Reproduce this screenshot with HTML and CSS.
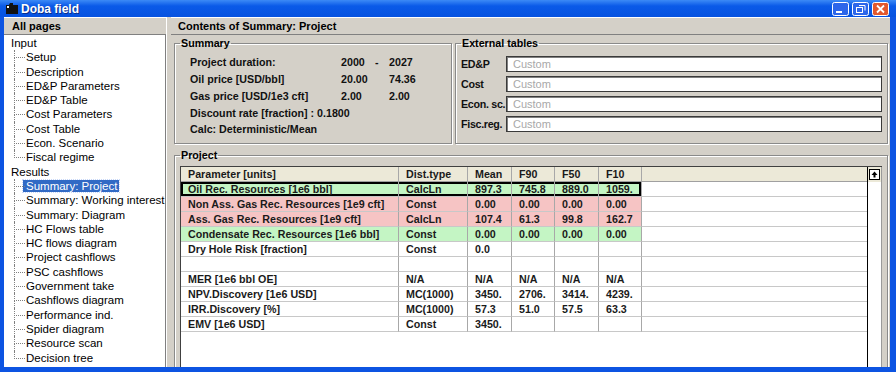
FILE: index.html
```html
<!DOCTYPE html>
<html lang="en">
<head>
    <meta charset="UTF-8">
    <title>Doba field</title>
    <link rel="stylesheet" href="styles.css">
</head>
<body>
    <div class="window">
        <div class="titlebar">
            <svg class="app-icon" width="12" height="11" viewBox="0 0 12 11">
                <path d="M0 2h3l1-2h3v2h5v9H0z" fill="#111"/>
                <rect x="1" y="3" width="2" height="2" fill="#fff"/>
            </svg>
            <span class="title">Doba field</span>
            <div class="controls">
                <svg class="ctl" width="17" height="14" viewBox="0 0 17 14">
                    <rect x="0.5" y="0.5" width="16" height="13" rx="2" fill="#2d66ea" stroke="#fff"/>
                    <rect x="4" y="9" width="6" height="2" fill="#fff"/>
                </svg>
                <svg class="ctl" width="17" height="14" viewBox="0 0 17 14">
                    <rect x="0.5" y="0.5" width="16" height="13" rx="2" fill="#2d66ea" stroke="#fff"/>
                    <rect x="4.5" y="5.5" width="6" height="5" fill="none" stroke="#fff"/>
                    <path d="M7 3.5h6v5" fill="none" stroke="#fff"/>
                </svg>
                <svg class="ctl" width="17" height="14" viewBox="0 0 17 14">
                    <rect x="0.5" y="0.5" width="16" height="13" rx="2" fill="#e2582e" stroke="#fff"/>
                    <path d="M5 3.5l7 7M12 3.5l-7 7" stroke="#fff" stroke-width="1.8"/>
                </svg>
            </div>
        </div>
        <div class="frame">
            <div class="sidebar">
                <div class="pane-head">All pages</div>
                <ul class="tree">
                    <li>Input
                        <ul>
                            <li>Setup</li>
                            <li>Description</li>
                            <li>ED&amp;P Parameters</li>
                            <li>ED&amp;P Table</li>
                            <li>Cost Parameters</li>
                            <li>Cost Table</li>
                            <li>Econ. Scenario</li>
                            <li>Fiscal regime</li>
                        </ul>
                    </li>
                    <li>Results
                        <ul>
                            <li class="sel"><span>Summary: Project</span></li>
                            <li>Summary: Working interest</li>
                            <li>Summary: Diagram</li>
                            <li>HC Flows table</li>
                            <li>HC flows diagram</li>
                            <li>Project cashflows</li>
                            <li>PSC cashflows</li>
                            <li>Government take</li>
                            <li>Cashflows diagram</li>
                            <li>Performance ind.</li>
                            <li>Spider diagram</li>
                            <li>Resource scan</li>
                            <li>Decision tree</li>
                        </ul>
                    </li>
                </ul>
            </div>
            <div class="splitter"></div>
            <div class="main">
                <div class="pane-head">Contents of Summary: Project</div>
                <div class="content">
                    <div class="top-row">
                        <fieldset class="group summary">
                            <legend>Summary</legend>
                            <div class="summary-grid">
                                <span>Project duration:</span><span>2000</span><span>-</span><span>2027</span>
                                <span>Oil price [USD/bbl]</span><span>20.00</span><span></span><span>74.36</span>
                                <span>Gas price [USD/1e3 cft]</span><span>2.00</span><span></span><span>2.00</span>
                                <span class="wide">Discount rate [fraction] : 0.1800</span>
                                <span class="wide">Calc: Deterministic/Mean</span>
                            </div>
                        </fieldset>
                        <fieldset class="group external">
                            <legend>External tables</legend>
                            <div class="ext-row"><label>ED&amp;P</label><input type="text" placeholder="Custom"></div>
                            <div class="ext-row"><label>Cost</label><input type="text" placeholder="Custom"></div>
                            <div class="ext-row"><label>Econ. sc.</label><input type="text" placeholder="Custom"></div>
                            <div class="ext-row"><label>Fisc.reg.</label><input type="text" placeholder="Custom"></div>
                        </fieldset>
                    </div>
                    <fieldset class="group project">
                        <legend>Project</legend>
                        <div class="grid-wrap">
                            <table class="grid">
                                <colgroup>
                                    <col style="width:218px"><col style="width:69px"><col style="width:44px">
                                    <col style="width:43px"><col style="width:44px"><col style="width:43px"><col>
                                </colgroup>
                                <thead>
                                    <tr><th>Parameter [units]</th><th>Dist.type</th><th>Mean</th><th>F90</th><th>F50</th><th>F10</th><th class="fill"></th></tr>
                                </thead>
                                <tbody>
                                    <tr class="green focus"><td>Oil Rec. Resources [1e6 bbl]</td><td>CalcLn</td><td>897.3</td><td>745.8</td><td>889.0</td><td>1059.</td><td class="fill"></td></tr>
                                    <tr class="pink"><td>Non Ass. Gas Rec. Resources [1e9 cft]</td><td>Const</td><td>0.00</td><td>0.00</td><td>0.00</td><td>0.00</td><td class="fill"></td></tr>
                                    <tr class="pink"><td>Ass. Gas Rec. Resources [1e9 cft]</td><td>CalcLn</td><td>107.4</td><td>61.3</td><td>99.8</td><td>162.7</td><td class="fill"></td></tr>
                                    <tr class="green"><td>Condensate Rec. Resources [1e6 bbl]</td><td>Const</td><td>0.00</td><td>0.00</td><td>0.00</td><td>0.00</td><td class="fill"></td></tr>
                                    <tr><td>Dry Hole Risk [fraction]</td><td>Const</td><td>0.0</td><td></td><td></td><td></td><td class="fill"></td></tr>
                                    <tr><td></td><td></td><td></td><td></td><td></td><td></td><td class="fill"></td></tr>
                                    <tr><td>MER [1e6 bbl OE]</td><td>N/A</td><td>N/A</td><td>N/A</td><td>N/A</td><td>N/A</td><td class="fill"></td></tr>
                                    <tr><td>NPV.Discovery [1e6 USD]</td><td>MC(1000)</td><td>3450.</td><td>2706.</td><td>3414.</td><td>4239.</td><td class="fill"></td></tr>
                                    <tr><td>IRR.Discovery [%]</td><td>MC(1000)</td><td>57.3</td><td>51.0</td><td>57.5</td><td>63.3</td><td class="fill"></td></tr>
                                    <tr><td>EMV [1e6 USD]</td><td>Const</td><td>3450.</td><td></td><td></td><td></td><td class="fill"></td></tr>
                                </tbody>
                            </table>
                            <div class="scrollbar">
                                <div class="scroll-head">
                                    <span class="scroll-btn">
                                        <svg width="7" height="7" viewBox="0 0 7 7"><path d="M3.5 0.5L6.5 4H4.5V6.5H2.5V4H0.5z" fill="#000"/></svg>
                                    </span>
                                </div>
                            </div>
                        </div>
                    </fieldset>
                </div>
            </div>
        </div>
    </div>
</body>
</html>
```

FILE: styles.css
```css
body {
    margin: 0;
    padding: 0;
    font-family: "Liberation Sans", Arial, sans-serif;
    background-color: #0d54e2;
}
.window {
    width: 896px;
    height: 372px;
    display: flex;
    flex-direction: column;
    background-color: #0d54e2;
    overflow: hidden;
}
.titlebar {
    height: 17px;
    flex: none;
    display: flex;
    align-items: center;
    padding: 0 7px 0 6px;
    background: linear-gradient(#3c8af6, #0a5ae8 35%, #0652e0);
    color: #fff;
}
.app-icon {
    margin-right: 3px;
}
.title {
    font-size: 12px;
    font-weight: bold;
    text-shadow: 1px 1px 0 #0b2f8a;
}
.controls {
    margin-left: auto;
    display: flex;
    gap: 3px;
}
.frame {
    flex: 1;
    display: flex;
    min-height: 0;
    padding: 0 6px 5px 4px;
}
.sidebar {
    width: 162px;
    display: flex;
    flex-direction: column;
}
.pane-head {
    height: 16px;
    flex: none;
    line-height: 16px;
    padding-left: 8px;
    background-color: #d4d0c8;
    border-top: 1px solid #fff;
    border-bottom: 1px solid #808080;
    font-size: 11px;
    font-weight: bold;
    color: #000;
}
.main .pane-head {
    padding-left: 7px;
}
.tree {
    flex: 1;
    list-style: none;
    margin: 0;
    padding: 1px 0 0 7px;
    background-color: #fff;
    border-right: 1px solid #808080;
    font-size: 11.5px;
    line-height: 14.3px;
    color: #000;
    overflow: hidden;
    white-space: nowrap;
}
.tree ul {
    list-style: none;
    margin: 0;
    padding: 0 0 0 15px;
}
.tree ul li {
    position: relative;
}
.tree ul li::before {
    content: "";
    position: absolute;
    left: -12px;
    top: 0;
    width: 10px;
    height: 7px;
    border-left: 1px dotted #808080;
    border-bottom: 1px dotted #808080;
}
.tree ul li::after {
    content: "";
    position: absolute;
    left: -12px;
    top: 7px;
    bottom: 0;
    border-left: 1px dotted #808080;
}
.tree ul li:last-child::after {
    display: none;
}
.tree .sel span {
    display: inline-block;
    line-height: 12px;
    margin-left: -3px;
    padding: 0 2px 0 3px;
    background-color: #316ac5;
    color: #fff;
    outline: 1px dotted #c8d8f8;
}
.splitter {
    width: 4px;
    background-color: #d4d0c8;
    border-left: 1px solid #fff;
}
.main {
    flex: 1;
    display: flex;
    flex-direction: column;
    background-color: #d4d0c8;
    overflow: hidden;
}
.content {
    flex: 1;
    display: flex;
    flex-direction: column;
    padding: 2px 2px 0 3px;
    min-height: 0;
}
.top-row {
    display: flex;
    gap: 3px;
    height: 107px;
    flex: none;
}
.group {
    margin: 0;
    padding: 0 5px;
    border: 1px solid #8a8a8a;
    box-shadow: inset 1px 1px 0 #fff, 1px 1px 0 #fff;
    min-width: 0;
}
.group legend {
    padding: 0 1px;
    font-size: 10.7px;
    line-height: 13px;
    font-weight: bold;
    color: #000;
}
.summary {
    width: 266px;
    flex: none;
}
.summary-grid {
    display: grid;
    grid-template-columns: 151px 34px 14px auto;
    grid-auto-rows: 16.75px;
    align-items: center;
    padding: 4px 0 0 10px;
    font-size: 10.7px;
    font-weight: bold;
    color: #111;
}
.summary-grid .wide {
    grid-column: 1 / 5;
}
.external {
    flex: 1;
}
.ext-row {
    display: flex;
    align-items: center;
    height: 16px;
    margin-bottom: 4px;
}
.ext-row:first-of-type {
    margin-top: 6px;
}
.ext-row label {
    width: 45px;
    flex: none;
    white-space: nowrap;
    font-size: 10.7px;
    letter-spacing: -0.3px;
    font-weight: bold;
    color: #111;
}
.ext-row input {
    flex: 1;
    height: 16px;
    box-sizing: border-box;
    margin: 0;
    padding: 0 0 0 6px;
    border: 1px solid #3a3a3a;
    box-shadow: inset 1px 1px 0 #808080;
    background-color: #fff;
    font-family: "Liberation Sans", Arial, sans-serif;
    font-size: 11px;
}
.ext-row input::placeholder {
    color: #a8a8a8;
}
.project {
    flex: 1;
    margin-top: 5px;
    margin-bottom: -20px;
    padding-top: 4px;
    display: flex;
    flex-direction: column;
}
.grid-wrap {
    flex: 1;
    display: flex;
    background-color: #fff;
    border-left: 1px solid #404040;
    border-top: 1px solid #404040;
}
.grid {
    flex: 1;
    align-self: flex-start;
    table-layout: fixed;
    border-collapse: separate;
    border-spacing: 0;
    font-size: 10.7px;
    font-weight: bold;
    color: #1a1a1a;
}
.grid th, .grid td {
    padding: 0 0 0 7px;
    height: 14px;
    line-height: 14px;
    text-align: left;
    white-space: nowrap;
    overflow: hidden;
    border-right: 1px solid #a8a8a8;
    border-bottom: 1px solid #c8c8c8;
}
.grid th {
    background-color: #ece9d8;
    border-bottom-color: #a0a0a0;
}
.grid .fill {
    border-right: none;
}
.grid tr.green td:not(.fill) {
    background-color: #c4f5c4;
}
.grid tr.pink td:not(.fill) {
    background-color: #f6c4c4;
}
.grid tr.focus td:not(.fill) {
    box-shadow: inset 0 2px #000, inset 0 -2px #000;
}
.grid tr.focus td:first-child {
    box-shadow: inset 0 2px #000, inset 0 -2px #000, inset 2px 0 #000;
}
.grid tr.focus td:nth-child(6) {
    box-shadow: inset 0 2px #000, inset 0 -2px #000, inset -2px 0 #000;
}
.scrollbar {
    width: 13px;
    flex: none;
    border-left: 1px solid #000;
    border-right: 1px solid #9a9a9a;
    background-color: #fff;
}
.scroll-head {
    height: 15px;
    background-color: #ece9d8;
    display: flex;
    justify-content: center;
    align-items: center;
}
.scroll-btn {
    width: 9px;
    height: 9px;
    border: 1px solid #000;
    background-color: #fff;
    display: flex;
    justify-content: center;
    align-items: center;
}
```
